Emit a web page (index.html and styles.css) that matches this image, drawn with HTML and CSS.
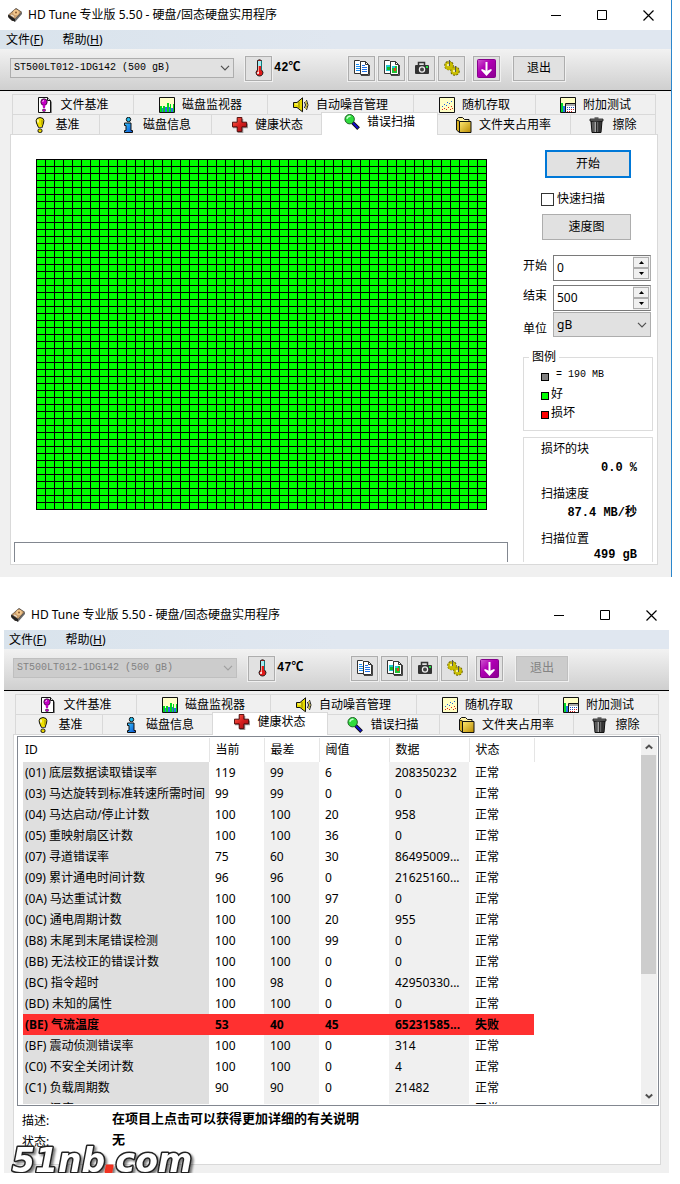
FILE: index.html
```html
<!DOCTYPE html>
<html lang="zh-CN">
<head>
<meta charset="utf-8">
<meta name="viewport" content="width=device-width, initial-scale=1">
<title>HD Tune 专业版 5.50</title>
<link rel="stylesheet" href="styles.css">
</head>
<body>
<svg class="sprite" aria-hidden="true">
  <defs>
    <linearGradient id="g-red" x1="0" y1="0" x2="1" y2="1"><stop offset="0" stop-color="#ff6a50"/><stop offset=".5" stop-color="#d81f1f"/><stop offset="1" stop-color="#9a0f12"/></linearGradient>
    <linearGradient id="g-blue" x1="0" y1="0" x2="1" y2="1"><stop offset="0" stop-color="#35c5ff"/><stop offset="1" stop-color="#0a4fd0"/></linearGradient>
    <linearGradient id="g-gold" x1="0" y1="0" x2="1" y2="1"><stop offset="0" stop-color="#ffe870"/><stop offset="1" stop-color="#b88a00"/></linearGradient>
    <linearGradient id="g-mag" x1="0" y1="0" x2="1" y2="1"><stop offset="0" stop-color="#d05ad0"/><stop offset=".4" stop-color="#b000b4"/><stop offset="1" stop-color="#8a0090"/></linearGradient>
    <linearGradient id="g-can" x1="0" y1="0" x2="1" y2="0"><stop offset="0" stop-color="#222"/><stop offset=".35" stop-color="#bbb"/><stop offset=".6" stop-color="#666"/><stop offset="1" stop-color="#222"/></linearGradient>
    <symbol id="i-drive" viewBox="0 0 16 16"><path d="M1 8L9 1l6 4-7 9-3 0-4-4z" fill="#4a4038"/><path d="M2 7.500L9 2l5 3-6 7z" fill="#caa070"/><circle cx="9" cy="5.500" r="2.800" fill="#f3c78c"/><circle cx="9" cy="5.500" r="1" fill="#8a5a30"/><path d="M1 8l7 4v3l-6-4z" fill="#222"/><path d="M8 12l7-7v2l-7 8z" fill="#6a6a6a"/><path d="M4 8l3 1.500" stroke="#eee"/></symbol>
    <symbol id="i-thermo" viewBox="0 0 16 18"><path d="M6.500 1.500q2-1.500 4 0V11q2.500 2 1 4.500-1 1.500-3 1.500t-3-1.500Q4 13 6.500 11z" fill="#e01818" stroke="#222"/><path d="M7 2h3v5H7z" fill="#a5eaf0"/><path d="M10.500 2v9" stroke="#177"/><path d="M7.500 7v7" stroke="#ff9b90"/><circle cx="7" cy="14" r="1" fill="#fff"/></symbol>
    <symbol id="i-doc" viewBox="0 0 16 16"><path d="M2 1h9l4 4v11H2z" fill="#888"/><path d="M1.500.5h9l3 3v12h-12z" fill="#fff" stroke="#111"/><path d="M10.500.5v3h3" fill="#ddd" stroke="#111"/><circle cx="7" cy="5" r="3.200" fill="#c400c4" stroke="#111" stroke-width=".7"/><path d="M5.500 7.500h3L8 11H6z" fill="#c400c4"/><rect x="5.500" y="12" width="3" height="2.500" rx="1" fill="#c400c4" stroke="#111" stroke-width=".5"/><path d="M5.500 4.500L7 3.500" stroke="#fff"/></symbol>
    <symbol id="i-bulb" viewBox="0 0 16 16"><path d="M5 1.500q3-2 6 0 1.500 2 .5 4.500L10 10.500H6.500L4.500 6q-1-2.500.5-4.500z" fill="#f0e000" stroke="#111"/><path d="M6 2.500v3" stroke="#fffbd0" stroke-width="1.500"/><path d="M10 3v5" stroke="#9c8b00"/><path d="M6.500 10.500h4" stroke="#555"/><rect x="6" y="12" width="4" height="3.500" rx="1.500" fill="#e6d200" stroke="#111"/></symbol>
    <symbol id="i-monitor" viewBox="0 0 16 16"><path d="M.5.500h15v15H.500z" fill="#ffffc8" stroke="#111"/><path d="M2 11h2v4H2zM6 10h2v5H6zM10 10h1v5h-1zM12 11h2v4h-2z" fill="#3068e8"/><path d="M1 9h2v6H1zM4 9h2v6H4zM8 6h2v9H8zM11 7h1v8h-1zM14 7h1v8h-1z" fill="#00d81c"/></symbol>
    <symbol id="i-info" viewBox="0 0 16 16"><circle cx="8.500" cy="2.500" r="2.200" fill="#21b8e8" stroke="#111"/><path d="M4.500 6h6.500v7.500h1.500v2h-8v-2H6V8.500H4.500z" fill="url(#g-blue)" stroke="#111"/></symbol>
    <symbol id="i-cross" viewBox="0 0 17 17"><path d="M6 2h6v5h5v5h-5v5H6v-5H1V7h5z" fill="#999"/><path d="M5.500.5h5v5h5v5h-5v5h-5v-5h-5v-5h5z" fill="url(#g-red)" stroke="#4a0808"/></symbol>
    <symbol id="i-speaker" viewBox="0 0 16 16"><path d="M.5 5.500h3.500L9.500.8v14L4 10.500H.500z" fill="#e8dc00" stroke="#111"/><path d="M6 5v6" stroke="#8c8200"/><path d="M2 7h3" stroke="#fff9a0"/><path d="M11.500 5q2 3 0 6" fill="none" stroke="#111"/><path d="M13.500 3q3 5 0 10" fill="none" stroke="#222"/><path d="M12.500 4q3 4 0 8" fill="none" stroke="#bda900"/></symbol>
    <symbol id="i-scan" viewBox="0 0 17 17"><path d="M9 9l6.500 6.500" stroke="#111" stroke-width="4"/><path d="M9.500 9.500l5.500 5.500" stroke="#1010d8" stroke-width="2"/><circle cx="6" cy="5.500" r="5" fill="#2fdc3e" stroke="#1b5c20"/><path d="M3 5q1-3 4-2.500" stroke="#c8ffd0" stroke-width="1.500" fill="none"/></symbol>
    <symbol id="i-random" viewBox="0 0 16 16"><path d="M.5.500h15v15H.500z" fill="#ffffc4" stroke="#111"/><path d="M3 9h1v1H3zM5 7h1v1H5zM7 8h1v1H7zM8 5h1v1H8zM10 6h1v1h-1zM12 4h1v1h-1z" fill="#2060e0"/><path d="M3 12h1v1H3zM5 11h1v1H5zM7 12h1v1H7zM9 10h1v1H9zM11 12h1v1h-1zM12 9h1v1h-1zM13 11h1v1h-1z" fill="#e02020"/></symbol>
    <symbol id="i-folder" viewBox="0 0 16 16"><path d="M.5 13V2.500l2-2h4l2 2h4.500v3" fill="#fff3a0" stroke="#111"/><path d="M.5 13V3l3 1v11.500z" fill="#d8b020" stroke="#111"/><path d="M3.500 4.500h11.500v11H3.500z" fill="url(#g-gold)" stroke="#111"/></symbol>
    <symbol id="i-extra" viewBox="0 0 16 16"><path d="M.5.500h15v15H.500z" fill="#ffffc4" stroke="#111"/><path d="M1 6h2v9H1z" fill="#00d828"/><path d="M3 9h2v6H3z" fill="#2878e8"/><path d="M5.500 6.500h10v9h-10z" fill="#fff" stroke="#111"/><path d="M6 7h9v2H6z" fill="#aaa"/><path d="M7 10h1v1H7zM9 10h1v1H9zM11 10h1v1h-1zM13 10h1v1h-1zM7 12h1v1H7zM9 12h1v1H9z" fill="#2050c0"/><path d="M11 12h1v1h-1zM13 12h1v1h-1zM7 14h1v1H7zM9 14h1v1H9zM11 14h1v1h-1z" fill="#d02020"/></symbol>
    <symbol id="i-trash" viewBox="0 0 16 16"><path d="M2 4h11l-1 11.500H3z" fill="url(#g-can)" stroke="#111"/><path d="M1 2h13v2H1z" fill="#777" stroke="#111" stroke-width=".8"/><path d="M5.500 1h4" stroke="#111"/><path d="M5 5v10M7.500 5v10M10 5v10" stroke="#111" stroke-width=".8"/></symbol>
    <symbol id="i-copytext" viewBox="0 0 16 16"><path d="M.5.500h5l3 3v10h-8z" fill="#fff" stroke="#333"/><path d="M2 4.500h3M2 6.500h4M2 8.500h4M2 10.500h4" stroke="#1c8cf0"/><path d="M6.500 1.500h5l3 3v10h-8z" fill="#fff" stroke="#333"/><path d="M11.500 1.500v3h3" fill="none" stroke="#333"/><path d="M8 5.500h3M8 7.500h5M8 9.500h5M8 11.500h5" stroke="#1c70e8"/><path d="M7 15.500h8.500V5" fill="none" stroke="#444"/></symbol>
    <symbol id="i-copypic" viewBox="0 0 16 16"><path d="M.5.500h5l3 3v10h-8z" fill="#fff" stroke="#333"/><path d="M2 5h5v6H2z" fill="#20c8d0"/><path d="M3 7h3v3H3z" fill="#18b828"/><path d="M6.500 1.500h5l3 3v10h-8z" fill="#fff" stroke="#333"/><path d="M11.500 1.500v3h3" fill="none" stroke="#333"/><path d="M8 6h5v7H8z" fill="#20c030"/><path d="M8 6h3v2H8z" fill="#20c8e0"/><path d="M10 8h2v3h-2z" fill="#e84020"/><path d="M7 15.500h8.500V5" fill="none" stroke="#444"/></symbol>
    <symbol id="i-camera" viewBox="0 0 16 16"><path d="M4.500 5V2.500h6V5" fill="none" stroke="#333" stroke-width="1.500"/><rect x="1" y="5" width="14" height="9" rx="1" fill="#333"/><circle cx="8" cy="9.500" r="3.200" fill="#eee"/><circle cx="8" cy="9.500" r="2" fill="#444"/><path d="M12 6h2v2h-2z" fill="#20e040"/></symbol>
    <symbol id="i-gears" viewBox="0 0 16 16"><g fill="#c8bc00" stroke="#6a6400"><circle cx="5" cy="5.500" r="4" stroke-dasharray="2 1" stroke-width="1.600"/><circle cx="11" cy="11" r="4" stroke-dasharray="2 1" stroke-width="1.600"/></g><circle cx="5" cy="6" r="4" fill="#c8bc00"/><circle cx="11" cy="11" r="3.800" fill="#c8bc00"/><circle cx="4" cy="5" r="1.200" fill="#f4f0a0"/><circle cx="10" cy="11" r="1.200" fill="#f4f0a0"/><path d="M5.500 0v6M11.500 6v6" stroke="#555"/></symbol>
    <symbol id="i-down" viewBox="0 0 19 19"><rect x=".5" y=".5" width="18" height="18" rx="1" fill="url(#g-mag)" stroke="#86008c"/><path d="M9.500 3v10" stroke="#fff" stroke-width="2"/><path d="M4 11l1-1 4.500 2 4.500-2 1 1-5.500 6z" fill="#fff"/></symbol>
    <symbol id="i-min" viewBox="0 0 11 11"><path d="M0 5.500h10" stroke="#000"/></symbol>
    <symbol id="i-max" viewBox="0 0 11 11"><path d="M.5.500h9v9h-9z" fill="none" stroke="#000"/></symbol>
    <symbol id="i-close" viewBox="0 0 11 11"><path d="M.5.500l10 10M10.500.5l-10 10" stroke="#000" stroke-width="1.200"/></symbol>
    <symbol id="i-chevron" viewBox="0 0 10 6"><path d="M1 .8l4 4 4-4" fill="none" stroke="currentColor" stroke-width="1.200"/></symbol>
    <symbol id="i-arrow" viewBox="0 0 8 6"><path d="M.8 4.500L4 1.500l3.200 3" fill="none" stroke="#505050" stroke-width="2"/></symbol>
    <symbol id="i-spin" viewBox="0 0 5 3"><path d="M0 3L2.500 0 5 3z"/></symbol>
  </defs>
</svg>

<main class="screens">
<section class="window" aria-label="错误扫描">
  <header class="titlebar">
    <svg class="icon"><use href="#i-drive"/></svg>
    <h1 class="titlebar__text">HD Tune 专业版 5.50 - 硬盘/固态硬盘实用程序</h1>
    <div class="titlebar__controls">
      <button class="caption" aria-label="最小化"><svg><use href="#i-min"/></svg></button>
      <button class="caption" aria-label="最大化"><svg><use href="#i-max"/></svg></button>
      <button class="caption" aria-label="关闭"><svg><use href="#i-close"/></svg></button>
    </div>
  </header>
  <nav class="menu"><button class="menu__item">文件(<u>F</u>)</button><button class="menu__item">帮助(<u>H</u>)</button></nav>
  <div class="toolbar">
    <div class="combo combo--drive"><select class="combo__field" aria-label="硬盘"><option>ST500LT012-1DG142 (500 gB)</option></select><svg class="combo__chevron"><use href="#i-chevron"/></svg></div>
    <button class="tool" aria-label="温度"><svg class="icon icon--thermo"><use href="#i-thermo"/></svg></button>
    <span class="temp">42℃</span>
    <div class="toolbar__group">
      <button class="tool" aria-label="复制文本"><svg class="icon"><use href="#i-copytext"/></svg></button>
      <button class="tool" aria-label="复制图像"><svg class="icon"><use href="#i-copypic"/></svg></button>
      <button class="tool" aria-label="截图"><svg class="icon"><use href="#i-camera"/></svg></button>
      <button class="tool" aria-label="选项"><svg class="icon"><use href="#i-gears"/></svg></button>
    </div>
    <button class="tool tool--down" aria-label="最小化到托盘"><svg class="icon icon--down"><use href="#i-down"/></svg></button>
    <button class="tool tool--exit">退出</button>
  </div>
  <div class="client">
    <div class="tabs" role="tablist">
      <div class="tabs__row tabs__row--top">
        <button class="tab" role="tab"><svg class="icon"><use href="#i-doc"/></svg>文件基准</button>
        <button class="tab" role="tab"><svg class="icon"><use href="#i-monitor"/></svg>磁盘监视器</button>
        <button class="tab" role="tab"><svg class="icon"><use href="#i-speaker"/></svg>自动噪音管理</button>
        <button class="tab" role="tab"><svg class="icon"><use href="#i-random"/></svg>随机存取</button>
        <button class="tab" role="tab"><svg class="icon"><use href="#i-extra"/></svg>附加测试</button>
      </div>
      <div class="tabs__row tabs__row--bottom">
        <button class="tab" role="tab"><svg class="icon"><use href="#i-bulb"/></svg>基准</button>
        <button class="tab" role="tab"><svg class="icon"><use href="#i-info"/></svg>磁盘信息</button>
        <button class="tab" role="tab"><svg class="icon"><use href="#i-cross"/></svg>健康状态</button>
        <button class="tab tab--active" role="tab" aria-selected="true"><svg class="icon"><use href="#i-scan"/></svg>错误扫描</button>
        <button class="tab" role="tab"><svg class="icon"><use href="#i-folder"/></svg>文件夹占用率</button>
        <button class="tab" role="tab"><svg class="icon"><use href="#i-trash"/></svg>擦除</button>
      </div>
    </div>
    <div class="panel scan" role="tabpanel">
      <div class="scan__main">
        <div class="blockmap" role="img" aria-label="扫描块"></div>
        <div class="message"></div>
      </div>
      <div class="scan__side">
        <button class="button button--default">开始</button>
        <label class="check"><input class="check__box" type="checkbox">快速扫描</label>
        <button class="button button--speed">速度图</button>
        <div class="fields">
          <div class="field"><label for="from">开始</label>
            <div class="spin"><input id="from" class="spin__input" type="text" value="0"><div class="spin__buttons"><button class="spin__button" aria-label="增加"><svg><use href="#i-spin"/></svg></button><button class="spin__button spin__button--down" aria-label="减少"><svg><use href="#i-spin"/></svg></button></div></div></div>
          <div class="field"><label for="to">结束</label>
            <div class="spin"><input id="to" class="spin__input" type="text" value="500"><div class="spin__buttons"><button class="spin__button" aria-label="增加"><svg><use href="#i-spin"/></svg></button><button class="spin__button spin__button--down" aria-label="减少"><svg><use href="#i-spin"/></svg></button></div></div></div>
          <div class="field field--unit"><label for="unit">单位</label>
            <div class="combo combo--unit"><select id="unit" class="combo__field"><option>gB</option></select><svg class="combo__chevron"><use href="#i-chevron"/></svg></div></div>
        </div>
        <fieldset class="legend">
          <legend class="legend__title">图例</legend>
          <ul class="legend__list">
            <li class="legend__item legend__item--size"><span class="swatch swatch--size"></span>= 190 MB</li>
            <li class="legend__item"><span class="swatch swatch--good"></span>好</li>
            <li class="legend__item"><span class="swatch swatch--bad"></span>损坏</li>
          </ul>
        </fieldset>
        <dl class="stats">
          <div class="stat"><dt>损坏的块</dt><dd>0.0 %</dd></div>
          <div class="stat"><dt>扫描速度</dt><dd>87.4 MB/秒</dd></div>
          <div class="stat stat--tight"><dt>扫描位置</dt><dd>499 gB</dd></div>
        </dl>
      </div>
    </div>
  </div>
</section>

<section class="window window--inactive" aria-label="健康状态">
  <header class="titlebar">
    <svg class="icon"><use href="#i-drive"/></svg>
    <h1 class="titlebar__text">HD Tune 专业版 5.50 - 硬盘/固态硬盘实用程序</h1>
    <div class="titlebar__controls">
      <button class="caption" aria-label="最小化"><svg><use href="#i-min"/></svg></button>
      <button class="caption" aria-label="最大化"><svg><use href="#i-max"/></svg></button>
      <button class="caption" aria-label="关闭"><svg><use href="#i-close"/></svg></button>
    </div>
  </header>
  <nav class="menu"><button class="menu__item">文件(<u>F</u>)</button><button class="menu__item">帮助(<u>H</u>)</button></nav>
  <div class="toolbar">
    <div class="combo combo--drive combo--disabled"><select class="combo__field" aria-label="硬盘" disabled><option>ST500LT012-1DG142 (500 gB)</option></select><svg class="combo__chevron"><use href="#i-chevron"/></svg></div>
    <button class="tool" aria-label="温度"><svg class="icon icon--thermo"><use href="#i-thermo"/></svg></button>
    <span class="temp">47℃</span>
    <div class="toolbar__group">
      <button class="tool" aria-label="复制文本"><svg class="icon"><use href="#i-copytext"/></svg></button>
      <button class="tool" aria-label="复制图像"><svg class="icon"><use href="#i-copypic"/></svg></button>
      <button class="tool" aria-label="截图"><svg class="icon"><use href="#i-camera"/></svg></button>
      <button class="tool" aria-label="选项"><svg class="icon"><use href="#i-gears"/></svg></button>
    </div>
    <button class="tool tool--down" aria-label="最小化到托盘"><svg class="icon icon--down"><use href="#i-down"/></svg></button>
    <button class="tool tool--exit" disabled>退出</button>
  </div>
  <div class="client">
    <div class="tabs" role="tablist">
      <div class="tabs__row tabs__row--top">
        <button class="tab" role="tab"><svg class="icon"><use href="#i-doc"/></svg>文件基准</button>
        <button class="tab" role="tab"><svg class="icon"><use href="#i-monitor"/></svg>磁盘监视器</button>
        <button class="tab" role="tab"><svg class="icon"><use href="#i-speaker"/></svg>自动噪音管理</button>
        <button class="tab" role="tab"><svg class="icon"><use href="#i-random"/></svg>随机存取</button>
        <button class="tab" role="tab"><svg class="icon"><use href="#i-extra"/></svg>附加测试</button>
      </div>
      <div class="tabs__row tabs__row--bottom">
        <button class="tab" role="tab"><svg class="icon"><use href="#i-bulb"/></svg>基准</button>
        <button class="tab" role="tab"><svg class="icon"><use href="#i-info"/></svg>磁盘信息</button>
        <button class="tab tab--active" role="tab" aria-selected="true"><svg class="icon"><use href="#i-cross"/></svg>健康状态</button>
        <button class="tab" role="tab"><svg class="icon"><use href="#i-scan"/></svg>错误扫描</button>
        <button class="tab" role="tab"><svg class="icon"><use href="#i-folder"/></svg>文件夹占用率</button>
        <button class="tab" role="tab"><svg class="icon"><use href="#i-trash"/></svg>擦除</button>
      </div>
    </div>
    <div class="panel health" role="tabpanel">
      <div class="list">
        <div class="list__view">
          <table class="smart">
            <colgroup><col class="smart__id"><col class="smart__num"><col class="smart__num"><col class="smart__limit"><col class="smart__data"><col class="smart__status"></colgroup>
            <thead><tr><th>ID</th><th>当前</th><th>最差</th><th>阈值</th><th>数据</th><th>状态</th></tr></thead>
            <tbody>
              <tr><td>(01) 底层数据读取错误率</td><td>119</td><td>99</td><td>6</td><td>208350232</td><td>正常</td></tr>
              <tr><td>(03) 马达旋转到标准转速所需时间</td><td>99</td><td>99</td><td>0</td><td>0</td><td>正常</td></tr>
              <tr><td>(04) 马达启动/停止计数</td><td>100</td><td>100</td><td>20</td><td>958</td><td>正常</td></tr>
              <tr><td>(05) 重映射扇区计数</td><td>100</td><td>100</td><td>36</td><td>0</td><td>正常</td></tr>
              <tr><td>(07) 寻道错误率</td><td>75</td><td>60</td><td>30</td><td>86495009...</td><td>正常</td></tr>
              <tr><td>(09) 累计通电时间计数</td><td>96</td><td>96</td><td>0</td><td>21625160...</td><td>正常</td></tr>
              <tr><td>(0A) 马达重试计数</td><td>100</td><td>100</td><td>97</td><td>0</td><td>正常</td></tr>
              <tr><td>(0C) 通电周期计数</td><td>100</td><td>100</td><td>20</td><td>955</td><td>正常</td></tr>
              <tr><td>(B8) 末尾到末尾错误检测</td><td>100</td><td>100</td><td>99</td><td>0</td><td>正常</td></tr>
              <tr><td>(BB) 无法校正的错误计数</td><td>100</td><td>100</td><td>0</td><td>0</td><td>正常</td></tr>
              <tr><td>(BC) 指令超时</td><td>100</td><td>98</td><td>0</td><td>42950330...</td><td>正常</td></tr>
              <tr><td>(BD) 未知的属性</td><td>100</td><td>100</td><td>0</td><td>0</td><td>正常</td></tr>
              <tr class="smart__failed"><td>(BE) 气流温度</td><td>53</td><td>40</td><td>45</td><td>65231585...</td><td>失败</td></tr>
              <tr><td>(BF) 震动侦测错误率</td><td>100</td><td>100</td><td>0</td><td>314</td><td>正常</td></tr>
              <tr><td>(C0) 不安全关闭计数</td><td>100</td><td>100</td><td>0</td><td>4</td><td>正常</td></tr>
              <tr><td>(C1) 负载周期数</td><td>90</td><td>90</td><td>0</td><td>21482</td><td>正常</td></tr>
              <tr><td>(C2) 温度</td><td></td><td></td><td></td><td></td><td>正常</td></tr>
            </tbody>
          </table>
        </div>
        <div class="scrollbar">
          <button class="scrollbar__arrow" aria-label="向上"><svg><use href="#i-arrow"/></svg></button>
          <div class="scrollbar__track"><div class="scrollbar__thumb"></div></div>
          <button class="scrollbar__arrow scrollbar__arrow--down" aria-label="向下"><svg><use href="#i-arrow"/></svg></button>
        </div>
      </div>
      <dl class="details">
        <dt>描述:</dt><dd>在项目上点击可以获得更加详细的有关说明</dd>
        <dt>状态:</dt><dd>无</dd>
      </dl>
    </div>
  </div>
  <svg class="watermark" viewBox="0 0 200 40" role="img">
    <defs><filter id="soft"><feDropShadow dx="2" dy="2" stdDeviation="1" flood-color="#000" flood-opacity=".5"/></filter></defs>
    <g filter="url(#soft)">
      <text x="4" y="31">51nb<tspan class="watermark__dot" dx="-1">.</tspan><tspan dx="-1">com</tspan></text>
    </g>
  </svg>
</section>
</main>
</body>
</html>
```
FILE: styles.css
```css
* { box-sizing: border-box; }

body {
  margin: 0;
  background: #fff;
  color: #000;
  font: 12px/16px "Noto Sans", "Noto Sans CJK SC", sans-serif;
}

button, input, select { font: inherit; color: inherit; margin: 0; padding: 0; border-radius: 0; }
button { display: flex; align-items: center; justify-content: center; border: 0; background: none; white-space: nowrap; }
dl, dd, ul { margin: 0; padding: 0; }

.sprite { position: absolute; width: 0; height: 0; }
.icon { flex: none; width: 16px; height: 16px; }
.icon--thermo { height: 18px; }
.icon--down { width: 19px; height: 19px; }

.screens { display: flex; flex-direction: column; gap: 23px; }
.window { position: relative; margin-right: 8px; border-right: 1px solid #2b86cc; }
.window--inactive { margin: 0 11px 0 3px; border-right: 0; border-left: 1px solid #fff; }

/* title bar */
.titlebar { display: flex; align-items: center; height: 30px; padding: 0 17px 0 7px; background: #fff; }
.window--inactive .titlebar { padding: 0 12px 0 6px; }
.titlebar__text { flex: 1; margin: 0 0 0 5px; font-size: 12px; font-weight: 400; white-space: nowrap; }
.titlebar__controls { display: flex; gap: 35px; }
.caption svg { display: block; width: 11px; height: 11px; }

/* menu */
.menu { display: flex; gap: 19px; height: 19px; padding-left: 6px; background: linear-gradient(90deg, #d9e3ec, #e0e7f0 50%); }
.window--inactive .menu { padding-left: 5px; }

/* toolbar */
.toolbar { display: flex; align-items: center; height: 42px; padding: 0 0 3px 10px; border-bottom: 1px solid #000; background: linear-gradient(#f2f2f2, #cfcfcf); }
.window--inactive .toolbar { padding-left: 9px; }
.toolbar__group { display: flex; gap: 3px; }
.tool { flex: none; width: 27px; height: 25px; border: 1px solid #adadad; background: #e1e1e1; box-shadow: 0 0 0 1px #f0f0f0; }
.tool--down { margin-left: 8px; }
.tool--exit { width: 52px; margin-left: 13px; }
.tool--exit:disabled { background: #ccc; border-color: #bfbfbf; color: #838383; }
.temp { width: 74px; margin-left: 2px; font: bold 12px/16px "Liberation Mono", "Noto Sans CJK SC", monospace; }

.combo { position: relative; display: flex; }
.combo__field { width: 100%; appearance: none; border: 1px solid #adadad; background: #e1e1e1; opacity: 1; outline: 0; }
.combo__chevron { position: absolute; right: 4px; top: 50%; width: 10px; height: 6px; margin-top: -3px; color: #505050; pointer-events: none; }
.combo--drive { flex: none; width: 224px; height: 20px; margin-right: 11px; }
.combo--drive .combo__field { padding-left: 3px; font: 10px/16px "Liberation Mono", monospace; }
.combo--disabled .combo__field { background: #ccc; border-color: #bfbfbf; color: #838383; }
.combo--disabled .combo__chevron { color: #a0a0a0; }
.combo--unit { height: 25px; }
.combo--unit .combo__field { padding-left: 3px; line-height: 16px; }

/* tabs */
.client { display: flow-root; padding-bottom: 12px; background: #f0f0f0; }
.window--inactive .client { padding-bottom: 8px; }
.tabs { display: flex; flex-direction: column; margin: 3px 15px 0 12px; }
.window--inactive .tabs { margin: 3px 10px 0 11px; }
.tabs__row { display: grid; height: 20px; border-right: 1px solid #d9d9d9; }
.tabs__row--top { grid-template-columns: 121fr 134fr 146fr 122fr 120fr; }
.tabs__row--bottom { grid-template-columns: 87fr 112fr 112fr 113fr 134fr 85fr; }
.tab { gap: 7px; border: solid #d9d9d9; border-width: 1px 0 0 1px; background: #f0f0f0; }
.tab--active { position: relative; z-index: 1; margin: -2px -2px -1px; padding-bottom: 4px; border-width: 1px 1px 0; background: #fff; }

/* panels */
.panel { margin: 0 13px 0 10px; border: 1px solid #d9d9d9; background: #fff; }
.window--inactive .panel { margin: 0 8px 0 9px; }

/* error scan */
.scan { display: flex; gap: 15px; padding: 0 4px 2px 3px; }
.scan__main { flex: 1; display: flex; flex-direction: column; justify-content: space-between; padding-top: 24px; }
.blockmap {
  width: 451px; height: 351px; margin-left: 22px;
  background: linear-gradient(90deg, #000 1px, transparent 1px) 0 0 / 9px 7px, linear-gradient(#000 1px, #0f0 1px) 0 0 / 9px 7px;
}
.message { height: 20px; border: 1px solid #828790; border-bottom: 0; }
.scan__side { width: 130px; padding-top: 15px; }

.button { border: 1px solid #adadad; background: #e1e1e1; }
.button--default { width: 86px; height: 28px; margin-left: 22px; border: 2px solid #0078d7; }
.button--speed { width: 89px; height: 26px; margin: 7px 0 0 19px; }
.check { display: flex; align-items: center; gap: 3px; height: 16px; margin: 13px 0 0 18px; }
.check__box { appearance: none; width: 13px; height: 13px; border: 1px solid #333; background: #fff; }

.fields { display: flex; flex-direction: column; gap: 4px; margin-top: 15px; padding-right: 2px; }
.field { display: grid; grid-template-columns: 30px minmax(0, 1fr); line-height: 22px; }
.field--unit { margin-top: -3px; line-height: 34px; }
.field--unit label { height: 25px; }
.spin { display: flex; height: 26px; border: 1px solid #7a7a7a; border-right-color: #adadad; background: #fff; }
.spin__input { flex: 1; width: 0; min-width: 0; padding-left: 3px; border: 0; background: none; outline: 0; }
.spin__buttons { display: flex; flex: none; flex-direction: column; width: 17px; padding: 1px 1px 1px 0; background: #f0f0f0; }
.spin__button { flex: 1; border: 1px solid #adadad; background: #f0f0f0; }
.spin__button svg { width: 5px; height: 3px; }
.spin__button--down svg { transform: scaleY(-1); }

.legend { min-width: 0; height: 82px; margin: 12px 0 0; padding: 1px 0 0 17px; border: 1px solid #dcdcdc; }
.legend__title { margin-left: -12px; padding: 0 3px; }
.legend__list { list-style: none; }
.legend__item { display: flex; align-items: flex-end; gap: 2px; height: 19px; }
.legend__item--size { gap: 7px; font: 10px/16px "Liberation Mono", monospace; height: 17px; }
.swatch { width: 8px; height: 8px; margin-bottom: 2px; border: 1px solid #000; }
.swatch--size { background: #808080; }
.swatch--good { background: #0f0; }
.swatch--bad { background: #f00; }

.stats { margin-top: 6px; padding: 3px 15px 0 17px; height: 125px; border: 1px solid #dcdcdc; border-bottom: 0; }
.stat { display: flex; flex-direction: column; gap: 3px; height: 45px; }
.stat dd { text-align: right; font: bold 12px/16px "Liberation Mono", "Noto Sans CJK SC", monospace; }
.stat--tight { gap: 0; height: 32px; }

/* S.M.A.R.T. list */
.health { padding: 1px 1px 14px 3px; }
.list { display: flex; height: 370px; padding: 1px; border: 1px solid #828790; }
.list__view { flex: 1; overflow: hidden; padding-left: 4px; }
.smart { width: 511px; table-layout: fixed; border-collapse: collapse; }
.smart__id { width: 186px; }
.smart__num { width: 55px; }
.smart__limit { width: 70px; }
.smart__data { width: 80px; }
.smart__status { width: 65px; }
.smart th, .smart td { height: 21px; padding: 0 0 0 6px; line-height: 20px; font-weight: 400; text-align: left; white-space: nowrap; }
.smart th { height: 24px; border-right: 1px solid #e5e5e5; }
.smart th:first-child, .smart td:first-child { padding-left: 2px; }
.smart td:first-child { background: #dfdfdf; }
.smart td:nth-child(3), .smart td:nth-child(5) { background: #f0f0f0; }
.smart .smart__failed td { background: #ff3030; font-weight: 700; }

.scrollbar { display: flex; flex-direction: column; width: 16px; background: #f0f0f0; }
.scrollbar__arrow { height: 17px; }
.scrollbar__arrow svg { width: 8px; height: 6px; }
.scrollbar__arrow--down svg { transform: scaleY(-1); }
.scrollbar__track { flex: 1; }
.scrollbar__thumb { width: 15px; height: 66%; background: #cdcdcd; }

.details { display: grid; grid-template-columns: 90px 1fr; padding: 2px 0 0 5px; line-height: 21px; }
.details dt { padding-top: 2px; height: 21px; }
.details dd { font-size: 13px; font-weight: 700; }

/* site logo over the lower left corner */
.watermark { position: absolute; left: 4px; bottom: -8px; width: 200px; height: 40px; overflow: visible; }
.watermark text {
  font: italic 700 33px "DejaVu Sans", sans-serif;
  fill: #fff; stroke: #222; stroke-width: 3px; stroke-linejoin: round; paint-order: stroke;
}
.watermark .watermark__dot { fill: #f03020; stroke: #f03020; stroke-width: 2px; }
```
